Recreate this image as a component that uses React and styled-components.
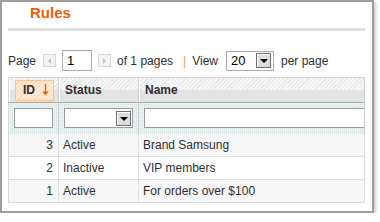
import React from 'react';
import styled, { createGlobalStyle } from 'styled-components';

const Global = createGlobalStyle`
  html, body { margin: 0; padding: 0; background: #fff; }
  body {
    font-family: Arial, "Liberation Sans", sans-serif;
    font-size: 12px;
    color: #2f2f2f;
  }
`;

const Frame = styled.div`
  box-sizing: border-box;
  width: 374px;
  border: 2px solid #9d9d9d;
  box-shadow: 2px 2px 3px rgba(0, 0, 0, 0.2);
  padding: 2px 7px 8px 6px;
  background: #fff;
`;

const Title = styled.h3`
  margin: 0;
  padding: 0 0 6px 22px;
  font: bold 15px/18px Arial, "Liberation Sans", sans-serif;
  color: #eb5e00;
  border-bottom: 3px solid #dfdfdf;
`;

const Pager = styled.div`
  display: flex;
  align-items: center;
  height: 21px;
  margin-top: 19px;
  line-height: 14px;
  white-space: nowrap;
`;

const Label = styled.span`
  margin-left: ${(p) => p.$ml || 0}px;
`;

const ArrowBtn = styled.span`
  box-sizing: border-box;
  width: 13px;
  height: 13px;
  margin-left: ${(p) => p.$ml}px;
  border: 1px solid #d6d6d6;
  background: #f3f3f3;
  display: flex;
  align-items: center;
  justify-content: center;
  &::after {
    content: '';
    width: 0;
    height: 0;
    border-top: 3px solid transparent;
    border-bottom: 3px solid transparent;
    ${(p) =>
      p.$dir === 'left'
        ? 'border-right: 3px solid #c4c4c4;'
        : 'border-left: 3px solid #c4c4c4;'}
  }
`;

const PageInput = styled.span`
  box-sizing: border-box;
  width: 30px;
  height: 21px;
  margin-left: 6px;
  border: 1px solid #aaa;
  padding: 3px 0 0 4px;
  font-size: 13px;
  color: #000;
  background: #fff;
`;

const Separator = styled.span`
  margin-left: 10px;
  color: #f19a48;
`;

const ViewSelect = styled.span`
  box-sizing: border-box;
  width: 48px;
  height: 20px;
  margin-left: ${(p) => p.$ml}px;
  border: 1px solid #aaa;
  background: #fff;
  display: flex;
  align-items: center;
  justify-content: space-between;
  padding: 0 2px 0 4px;
  font-size: 13px;
  color: #000;
`;

const DropBtn = styled.span`
  box-sizing: border-box;
  width: 15px;
  height: 15px;
  background: #dcdcdc;
  border: 1px solid #6f6f6f;
  box-shadow: inset 1px 1px 0 #fff;
  display: flex;
  align-items: center;
  justify-content: center;
  &::after {
    content: '';
    width: 0;
    height: 0;
    border-left: 4px solid transparent;
    border-right: 4px solid transparent;
    border-top: 4px solid #000;
    margin-top: 1px;
  }
`;

const Grid = styled.table`
  margin-top: 6px;
  width: 357px;
  border-collapse: collapse;
  table-layout: fixed;
  border: 1px solid #d6d6d6;
`;

const HeadRow = styled.tr`
  height: 25px;
  background:
    linear-gradient(to bottom, transparent 50%, #e3e3e3 50%),
    repeating-linear-gradient(135deg, #f6f6f6 0 2px, #e6e6e6 2px 3px);
  border-bottom: 1px solid #a4a4a4;
`;

const Th = styled.th`
  padding: 0 0 0 6px;
  text-align: left;
  font-weight: bold;
  font-size: 12px;
  color: #2f2f2f;
  border-right: 1px solid #d1d1d1;
  box-shadow: inset 1px 0 0 #fff;
`;

const SortBox = styled.div`
  box-sizing: border-box;
  height: 21px;
  margin: 0 4px 0 0;
  border: 1px solid #f1c69f;
  background: repeating-linear-gradient(135deg, #fde9d4 0 2px, #f9d9b9 2px 3px);
  display: flex;
  align-items: center;
  justify-content: space-between;
  padding: 0 4px 0 7px;
`;

const FilterRow = styled.tr`
  height: 31px;
  background-color: #d6e3e3;
  background-image:
    linear-gradient(90deg, rgba(255, 255, 255, 0.4) 1px, transparent 1px),
    linear-gradient(rgba(255, 255, 255, 0.4) 1px, transparent 1px);
  background-size: 2px 2px;
`;

const Fd = styled.td`
  padding: 0 5px;
  border-right: 1px solid #c2cccc;
  box-shadow: inset 1px 0 0 #eef4f4;
  overflow: hidden;
`;

const FilterInput = styled.div`
  box-sizing: border-box;
  height: 20px;
  width: ${(p) => p.$w || '100%'};
  border: 1px solid #9a9a9a;
  background: #fff;
`;

const FilterSelect = styled.div`
  box-sizing: border-box;
  height: 20px;
  border: 1px solid #9a9a9a;
  background: #fff;
  display: flex;
  align-items: center;
  justify-content: flex-end;
  padding-right: 1px;
`;

const Row = styled.tr`
  height: 23px;
  background: ${(p) => (p.$alt ? '#f6f6f6' : '#fff')};
  border-bottom: 1px solid #dadfe0;
`;

const Td = styled.td`
  padding: 0 ${(p) => (p.$right ? 5 : 4)}px 0 4px;
  text-align: ${(p) => (p.$right ? 'right' : 'left')};
  border-right: 1px solid #dadfe0;
  font-size: 12px;
  color: #2f2f2f;
  white-space: nowrap;
`;

const rows = [
  { id: 3, status: 'Active', name: 'Brand Samsung' },
  { id: 2, status: 'Inactive', name: 'VIP members' },
  { id: 1, status: 'Active', name: 'For orders over $100' },
];

function SortArrow() {
  return (
    <svg width="7" height="12" viewBox="0 0 7 12">
      <path d="M3.5 0 V10" stroke="#eb5e00" strokeWidth="1.3" />
      <path d="M0.5 7.5 L3.5 11.5 L6.5 7.5 Z" fill="#eb5e00" />
    </svg>
  );
}

export default function App() {
  return (
    <>
      <Global />
      <Frame>
        <Title>Rules</Title>
        <Pager>
          <Label>Page</Label>
          <ArrowBtn $dir="left" $ml={7} />
          <PageInput>1</PageInput>
          <ArrowBtn $dir="right" $ml={6} />
          <Label $ml={6}>of 1 pages</Label>
          <Separator>|</Separator>
          <Label $ml={6}>View</Label>
          <ViewSelect $ml={8}>
            20
            <DropBtn />
          </ViewSelect>
          <Label $ml={7}>per page</Label>
        </Pager>
        <Grid>
          <colgroup>
            <col style={{ width: 50 }} />
            <col style={{ width: 80 }} />
            <col />
          </colgroup>
          <thead>
            <HeadRow>
              <Th>
                <SortBox>
                  <span>ID</span>
                  <SortArrow />
                </SortBox>
              </Th>
              <Th>Status</Th>
              <Th>Name</Th>
            </HeadRow>
            <FilterRow>
              <Fd>
                <FilterInput />
              </Fd>
              <Fd>
                <FilterSelect>
                  <DropBtn />
                </FilterSelect>
              </Fd>
              <Fd>
                <FilterInput $w="260px" />
              </Fd>
            </FilterRow>
          </thead>
          <tbody>
            {rows.map((r, i) => (
              <Row key={r.id} $alt={i % 2 === 0}>
                <Td $right>{r.id}</Td>
                <Td>{r.status}</Td>
                <Td>{r.name}</Td>
              </Row>
            ))}
          </tbody>
        </Grid>
      </Frame>
    </>
  );
}
